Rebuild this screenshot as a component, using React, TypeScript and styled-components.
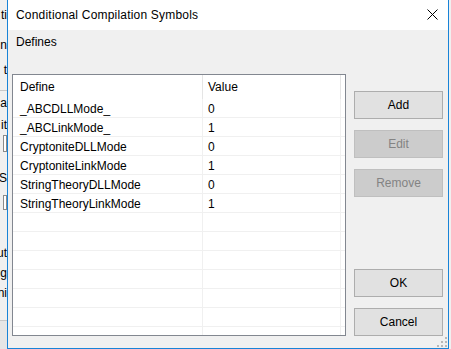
import styled, { createGlobalStyle } from "styled-components";

const GlobalStyle = createGlobalStyle`
  html, body {
    margin: 0;
    padding: 0;
    background: #f0f0f0;
  }
  body {
    font-family: "Liberation Sans", Arial, sans-serif;
    font-size: 12px;
    color: #000;
  }
`;

const defines = [
  { name: "_ABCDLLMode_", value: "0" },
  { name: "_ABCLinkMode_", value: "1" },
  { name: "CryptoniteDLLMode", value: "0" },
  { name: "CryptoniteLinkMode", value: "1" },
  { name: "StringTheoryDLLMode", value: "0" },
  { name: "StringTheoryLinkMode", value: "1" },
];

const EMPTY_ROWS = 7;

const CloseIcon = () => (
  <svg width="11" height="11" viewBox="0 0 11 11">
    <path d="M0.5 0.5 L10.5 10.5 M10.5 0.5 L0.5 10.5" stroke="#000" strokeWidth="1" fill="none" />
  </svg>
);

const Grip = () => (
  <svg width="10" height="10" viewBox="0 0 10 10">
    {[
      [8, 0],
      [4, 4],
      [8, 4],
      [0, 8],
      [4, 8],
      [8, 8],
    ].map(([x, y]) => (
      <rect key={`${x}-${y}`} x={x} y={y} width="2" height="2" fill="#b8b8b8" />
    ))}
  </svg>
);

// the window behind the dialog, only its right edge shows
const BehindWindow = () => (
  <Behind>
    <Frag $gap={8}>ti</Frag>
    <Frag $gap={16}>n</Frag>
    <Frag $gap={11}>t</Frag>
    <Rule $gap={13} />
    <Frag $gap={5}>a</Frag>
    <Frag $gap={8}>it</Frag>
    <Box $gap={3} $h={17} />
    <Frag $gap={19}>S</Frag>
    <Box $gap={10} $h={15} />
    <Frag $gap={36}>ut</Frag>
    <Frag $gap={6}>ug</Frag>
    <Frag $gap={6}>ni</Frag>
    <Rule $gap={20} />
    <Shade />
  </Behind>
);

const App = () => {
  return (
    <>
      <GlobalStyle />
      <Screen>
        <BehindWindow />
        <Dialog>
          <TitleBar>
            <Title>Conditional Compilation Symbols</Title>
            <CloseButton>
              <CloseIcon />
            </CloseButton>
          </TitleBar>
          <Body>
            <Label>Defines</Label>
            <Main>
              <List>
                <HeaderRow>
                  <HeaderCell $first>Define</HeaderCell>
                  <HeaderCell>Value</HeaderCell>
                </HeaderRow>
                {defines.map((d) => (
                  <Row key={d.name}>
                    <Cell $first>{d.name}</Cell>
                    <Cell>{d.value}</Cell>
                  </Row>
                ))}
                {Array.from({ length: EMPTY_ROWS }).map((_, i) => (
                  <Row key={`empty-${i}`}>
                    <Cell $first />
                    <Cell />
                  </Row>
                ))}
              </List>
              <Buttons>
                <Button>Add</Button>
                <Button disabled>Edit</Button>
                <Button disabled>Remove</Button>
                <Spacer />
                <Button>OK</Button>
                <Button>Cancel</Button>
              </Buttons>
            </Main>
            <GripCorner>
              <Grip />
            </GripCorner>
          </Body>
        </Dialog>
      </Screen>
    </>
  );
};

export default App;

const Screen = styled.div`
  display: flex;
  width: 451px;
  height: 349px;
  overflow: hidden;
  background: #f0f0f0;
`;

const Behind = styled.div`
  display: flex;
  flex-direction: column;
  width: 7px;
  flex-shrink: 0;
  overflow: hidden;
  background: #f0f0f0;
`;

const Frag = styled.div<{ $gap: number }>`
  display: flex;
  justify-content: flex-end;
  margin-top: ${(p) => p.$gap}px;
  height: 14px;
  line-height: 14px;
  white-space: nowrap;
`;

const Rule = styled.div<{ $gap: number }>`
  margin-top: ${(p) => p.$gap}px;
  height: 1px;
  background: #c8c8c8;
`;

const Box = styled.div<{ $gap: number; $h: number }>`
  margin-top: ${(p) => p.$gap}px;
  margin-left: 3px;
  height: ${(p) => p.$h}px;
  box-sizing: border-box;
  border: 1px solid #8a8a8a;
  background: #fff;
`;

const Shade = styled.div`
  flex: 1;
  background: #e6e6e6;
`;

const Dialog = styled.div`
  display: flex;
  flex-direction: column;
  width: 442px;
  flex-shrink: 0;
  box-sizing: border-box;
  border: 1px solid #1883d7;
  border-top: none;
  background: #f0f0f0;
`;

const TitleBar = styled.div`
  display: flex;
  align-items: center;
  justify-content: space-between;
  height: 30px;
  padding: 0 10px 0 8px;
  background: #fff;
`;

const Title = styled.span`
  font-size: 12px;
  letter-spacing: 0.2px;
`;

const CloseButton = styled.span`
  display: flex;
  margin-top: -1px;
`;

const Body = styled.div`
  position: relative;
  display: flex;
  flex-direction: column;
  flex: 1;
  padding: 4px 5px 12px 4px;
`;

const Label = styled.div`
  height: 16px;
  line-height: 16px;
  margin-left: 4px;
  margin-bottom: 24px;
`;

const Main = styled.div`
  display: grid;
  grid-template-columns: 334px 1fr;
  column-gap: 8px;
  height: 262px;
`;

const List = styled.div`
  box-sizing: border-box;
  height: 262px;
  border: 1px solid #828790;
  background: #fff;
  overflow: hidden;
`;

const HeaderRow = styled.div`
  display: grid;
  grid-template-columns: 190px 138px;
  height: 24px;
`;

const HeaderCell = styled.div<{ $first?: boolean }>`
  display: flex;
  align-items: center;
  padding-left: ${(p) => (p.$first ? 7 : 5)}px;
  padding-bottom: 1px;
  border-right: 1px solid #e5e5e5;
  box-sizing: border-box;
`;

const Row = styled.div`
  display: grid;
  grid-template-columns: 190px 138px;
  height: 19px;
  box-sizing: border-box;
  border-bottom: 1px solid #f0f0f0;
`;

const Cell = styled.div<{ $first?: boolean }>`
  display: flex;
  align-items: center;
  padding-top: 2px;
  padding-left: ${(p) => (p.$first ? 7 : 5)}px;
  border-right: 1px solid #f0f0f0;
  box-sizing: border-box;
  white-space: nowrap;
`;

const Buttons = styled.div`
  display: flex;
  flex-direction: column;
  gap: 11px;
  padding-top: 17px;
`;

const Spacer = styled.div`
  flex: 1;
`;

const Button = styled.button`
  height: 28px;
  padding: 0;
  box-sizing: border-box;
  border: 1px solid #adadad;
  border-radius: 0;
  background: #e1e1e1;
  color: #000;
  font-family: "Liberation Sans", Arial, sans-serif;
  font-size: 12px;

  &:disabled {
    border-color: #bfbfbf;
    background: #cccccc;
    color: #838383;
  }
`;

const GripCorner = styled.div`
  position: absolute;
  right: 1px;
  bottom: 1px;
  display: flex;
`;
